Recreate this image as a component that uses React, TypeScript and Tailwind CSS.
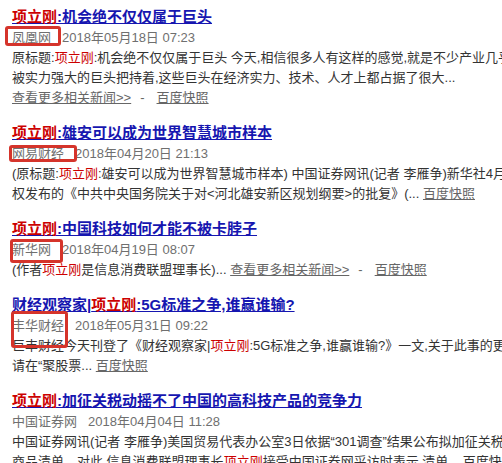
import React from 'react';

const RED = 'text-[#c00]';

type Box = { left: number; right: number; top: number; bottom: number };

const Source: React.FC<{ name: string; date: string; box?: Box }> = ({ name, date, box }) => (
  <div className="h-[21px] leading-[21px] text-[13px] text-[#6f6f6f]">
    <span className="relative">
      {name}
      {box && (
        <span
          className="absolute border-[3px] border-[#d5342b] rounded-[3px]"
          style={{ left: -box.left, right: -box.right, top: -box.top, bottom: -box.bottom }}
        />
      )}
    </span>
    <span className="ml-[11px]">{date}</span>
  </div>
);

const Hl: React.FC<{ children: React.ReactNode }> = ({ children }) => (
  <span className={RED}>{children}</span>
);

const Link: React.FC<{ children: React.ReactNode }> = ({ children }) => (
  <span className="underline text-[#666]">{children}</span>
);

const Title: React.FC<{ children: React.ReactNode }> = ({ children }) => (
  <div className="h-[21px] leading-[21px] text-[15px] font-bold text-[#1616b0] underline">
    {children}
  </div>
);

const Line: React.FC<{ children: React.ReactNode }> = ({ children }) => (
  <div className="h-[20px] leading-[20px] text-[13px] text-[#333]">{children}</div>
);

export default function App() {
  return (
    <div
      className="w-[502px] h-[463px] overflow-hidden bg-white pl-3 pt-[6px] whitespace-nowrap"
      style={{ fontFamily: '"Liberation Sans", "Noto Sans CJK SC", sans-serif' }}
    >
      <div className="mb-[14px]">
        <Title>
          <Hl>项立刚</Hl>:机会绝不仅仅属于巨头
        </Title>
        <Source name="凤凰网" date="2018年05月18日 07:23" box={{ left: 7, right: 10, top: 4, bottom: 1 }} />
        <Line>
          原标题:<Hl>项立刚</Hl>:机会绝不仅仅属于巨头 今天,相信很多人有这样的感觉,就是不少产业几乎
        </Line>
        <Line>被实力强大的巨头把持着,这些巨头在经济实力、技术、人才上都占据了很大...</Line>
        <Line>
          <Link>查看更多相关新闻&gt;&gt;</Link>
          <span className="text-[#666] mx-[9px]">-</span>
          <span className="ml-[3px]">
            <Link>百度快照</Link>
          </span>
        </Line>
      </div>

      <div className="mb-[14px]">
        <Title>
          <Hl>项立刚</Hl>:雄安可以成为世界智慧城市样本
        </Title>
        <Source name="网易财经" date="2018年04月20日 21:13" box={{ left: 3, right: 13, top: 1, bottom: 1 }} />
        <Line>
          (原标题:<Hl>项立刚</Hl>:雄安可以成为世界智慧城市样本) 中国证券网讯(记者 李雁争)新华社4月
        </Line>
        <Line>
          权发布的《中共中央国务院关于对&lt;河北雄安新区规划纲要&gt;的批复》(... <Link>百度快照</Link>
        </Line>
      </div>

      <div className="mb-[14px]">
        <Title>
          <Hl>项立刚</Hl>:中国科技如何才能不被卡脖子
        </Title>
        <Source name="新华网" date="2018年04月19日 08:07" box={{ left: 2, right: 12, top: 3, bottom: 6 }} />
        <Line>
          (作者<Hl>项立刚</Hl>是信息消费联盟理事长)... <Link>查看更多相关新闻&gt;&gt;</Link>
          <span className="text-[#666] mx-[9px]">-</span>
          <span className="ml-[3px]">
            <Link>百度快照</Link>
          </span>
        </Line>
      </div>

      <div className="mb-[14px]">
        <Title>
          财经观察家|<Hl>项立刚</Hl>:5G标准之争,谁赢谁输?
        </Title>
        <Source name="丰华财经" date="2018年05月31日 09:22" box={{ left: 1, right: 4, top: 7, bottom: 15 }} />
        <Line>
          巨丰财经今天刊登了《财经观察家|<Hl>项立刚</Hl>:5G标准之争,谁赢谁输?》一文,关于此事的更
        </Line>
        <Line>
          请在“聚股票... <Link>百度快照</Link>
        </Line>
      </div>

      <div>
        <Title>
          <Hl>项立刚</Hl>:加征关税动摇不了中国的高科技产品的竞争力
        </Title>
        <Source name="中国证券网" date="2018年04月04日 11:28" />
        <Line>中国证券网讯(记者 李雁争)美国贸易代表办公室3日依据“301调查”结果公布拟加征关税</Line>
        <Line>
          商品清单。对此,信息消费联盟理事长<Hl>项立刚</Hl>接受中国证券网采访时表示,清单... 百度快照
        </Line>
      </div>
    </div>
  );
}
